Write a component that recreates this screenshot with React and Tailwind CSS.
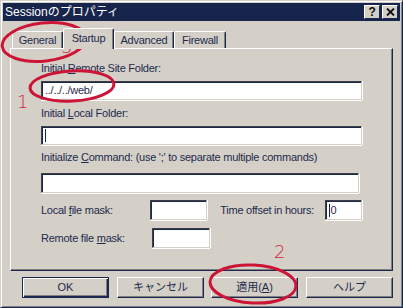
import React from 'react';

const Tab = ({ label, active, width }) => (
  <div
    className={`relative flex items-center justify-center rounded-t-[2px] border-l border-t border-r border-l-white border-t-white border-r-[#1b2750] bg-[#d4d0c8] shadow-[inset_-1px_0_0_#808080] ${
      active ? 'z-10 -mb-[1px] h-[21px] pb-[2px]' : 'h-[17px] pt-[1px]'
    }`}
    style={{ width }}
  >
    {label}
  </div>
);

const TextBox = ({ className = '', children }) => (
  <div
    className={`flex items-center bg-white border border-t-[#404040] border-l-[#404040] border-b-[#d4d0c8] border-r-[#d4d0c8] shadow-[inset_1px_1px_0_#1b2750,0_1px_0_#fff,1px_0_0_#fff] ${className}`}
  >
    {children}
  </div>
);

const Button = ({ children, isDefault, className = '' }) => (
  <div
    className={`flex h-[21px] w-[87px] items-center justify-center bg-[#d4d0c8] border ${
      isDefault
        ? 'border-[#1b2750] shadow-[inset_1px_1px_0_#fff,inset_-1px_-1px_0_#1b2750,inset_-2px_-2px_0_#808080]'
        : 'border-t-white border-l-white border-b-[#1b2750] border-r-[#1b2750] shadow-[inset_-1px_-1px_0_#808080]'
    } ${className}`}
  >
    {children}
  </div>
);

export default function App() {
  return (
    <div className="relative h-[308px] w-[403px] overflow-hidden bg-[#d4d0c8] font-['Liberation_Sans','Noto_Sans_CJK_JP',sans-serif] text-[11px] leading-[13px] tracking-[-0.25px] text-[#1e2a4c]">
      <div className="flex h-full flex-col border border-t-[#d4d0c8] border-l-[#d4d0c8] border-b-[#1b2750] border-r-[#1b2750] p-[2px] shadow-[inset_1px_1px_0_#fff,inset_-1px_-1px_0_#808080]">
        {/* title bar */}
        <div className="flex h-[18px] items-center justify-between bg-[#17254d] pl-[2px] pr-[2px]">
          <span className="text-[12px] tracking-normal text-white">Sessionのプロパティ</span>
          <div className="flex gap-[2px]">
            <div className="flex h-[14px] w-[16px] items-center justify-center border border-t-white border-l-white border-b-[#1b2750] border-r-[#1b2750] bg-[#d4d0c8] text-[12px] font-bold leading-none text-[#111]">
              ?
            </div>
            <div className="flex h-[14px] w-[16px] items-center justify-center border border-t-white border-l-white border-b-[#1b2750] border-r-[#1b2750] bg-[#d4d0c8]">
              <svg width="9" height="8" viewBox="0 0 9 8">
                <path d="M1 0.5L8 7.5M8 0.5L1 7.5" stroke="#111" strokeWidth="1.8" />
              </svg>
            </div>
          </div>
        </div>

        {/* tabs */}
        <div className="mx-[7px] mt-[6px] flex flex-col">
          <div className="flex h-[21px] items-end pl-[2px]">
            <Tab label="General" width={51} />
            <Tab label="Startup" width={51} active />
            <Tab label="Advanced" width={60} />
            <Tab label="Firewall" width={52} />
          </div>
          <div className="h-[223px] border border-t-white border-l-white border-b-[#1b2750] border-r-[#1b2750] px-[30px] pt-[13px] shadow-[inset_-1px_-1px_0_#808080]">
            <div>
              Initial <u>R</u>emote Site Folder:
            </div>
            <TextBox className="mt-[6px] h-[19px] w-[321px] pl-[3px]">../../../web/</TextBox>
            <div className="mt-[7px]">
              Initial <u>L</u>ocal Folder:
            </div>
            <TextBox className="mt-[6px] h-[19px] w-[321px] pl-[3px]">
              <div className="h-[13px] w-[1px] bg-[#1b2750]" />
            </TextBox>
            <div className="mt-[6px]">
              Initialize <u>C</u>ommand: (use ';' to separate multiple commands)
            </div>
            <TextBox className="mt-[9px] h-[20px] w-[318px]" />
            <div className="mt-[7px] flex items-center">
              <span className="w-[111px]">
                Local <u>f</u>ile mask:
              </span>
              <TextBox className="h-[20px] w-[58px]" />
              <span className="ml-[13px] w-[106px]">Time offset in hours:</span>
              <TextBox className="h-[20px] w-[38px] pl-[3px]">
                <span className="border-l border-[#1b2750] pl-[1px]">0</span>
              </TextBox>
            </div>
            <div className="mt-[8px] flex items-center">
              <span className="w-[111px]">
                Remote file <u>m</u>ask:
              </span>
              <TextBox className="h-[20px] w-[58px]" />
            </div>
          </div>
        </div>

        {/* buttons */}
        <div className="mt-[6px] flex pl-[19px] tracking-normal">
          <Button isDefault>OK</Button>
          <Button className="ml-[8px]">キャンセル</Button>
          <Button className="ml-[7px]">
            適用(<u>A</u>)
          </Button>
          <Button className="ml-[8px]">ヘルプ</Button>
        </div>
      </div>

      {/* red annotations */}
      <svg className="pointer-events-none absolute left-0 top-0" width="403" height="308">
        <ellipse cx="44" cy="42" rx="42" ry="19" transform="rotate(-6 44 42)" fill="none" stroke="#cc1436" strokeWidth="3" />
        <ellipse cx="72" cy="86" rx="42" ry="15" transform="rotate(-3 72 86)" fill="none" stroke="#cc1436" strokeWidth="3" />
        <ellipse cx="253" cy="284" rx="43" ry="19" transform="rotate(3 253 284)" fill="none" stroke="#cc1436" strokeWidth="3" />
      </svg>
      <span className="pointer-events-none absolute left-[61px] top-[38px] font-['DejaVu_Sans',sans-serif] text-[18px] font-light leading-none text-[#d42040]">3</span>
      <span className="pointer-events-none absolute left-[17px] top-[93px] font-['DejaVu_Sans',sans-serif] text-[18px] font-light leading-none text-[#d42040]">1</span>
      <span className="pointer-events-none absolute left-[274px] top-[243px] font-['DejaVu_Sans',sans-serif] text-[18px] font-light leading-none text-[#d42040]">2</span>
    </div>
  );
}
